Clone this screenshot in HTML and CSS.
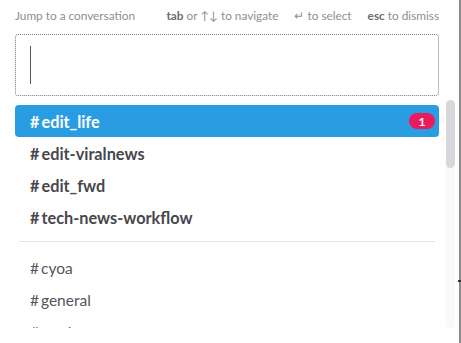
FILE: index.html
```html
<!DOCTYPE html>
<html>
<head>
<meta charset="utf-8">
<link rel="stylesheet" href="styles.css">
</head>
<body>
<div class="switcher">
  <div class="hints">
    <span class="hint-title">Jump to a conversation</span>
    <span class="keys"><b>tab</b> or ↑↓ to navigate<span class="sep"></span>↵ to select<span class="sep"></span><b>esc</b> to dismiss</span>
  </div>
  <div class="input"><span class="caret"></span></div>
  <div class="results">
    <div class="list">
      <div class="row selected"><span class="name"><span class="hash">#</span>edit_life</span><span class="badge">1</span></div>
      <div class="row bold"><span class="name"><span class="hash">#</span>edit-viralnews</span></div>
      <div class="row bold"><span class="name"><span class="hash">#</span>edit_fwd</span></div>
      <div class="row bold"><span class="name"><span class="hash">#</span>tech-news-workflow</span></div>
      <div class="divider"></div>
      <div class="row"><span class="name"><span class="hash">#</span>cyoa</span></div>
      <div class="row"><span class="name"><span class="hash">#</span>general</span></div>
      <div class="row"><span class="name"><span class="hash">#</span>random</span></div>
    </div>
    <div class="scrollbar"><div class="thumb"></div></div>
  </div>
</div>
</body>
</html>
```
FILE: styles.css
```css
html, body {
  margin: 0;
  padding: 0;
  background: #fff;
}
body {
  width: 461px;
  height: 343px;
  overflow: hidden;
  font-family: Lato, "Noto Sans", sans-serif;
}
.switcher {
  box-sizing: border-box;
  width: 461px;
  height: 343px;
  padding-left: 15px;
  border-right: 2px solid #8c8c8c;
  position: relative;
}
.switcher::after {
  content: "";
  position: absolute;
  right: -2px;
  top: 280px;
  width: 3px;
  height: 2px;
  background: #333;
}
.hints {
  height: 34px;
  width: 424px;
  display: flex;
  justify-content: space-between;
  align-items: center;
  font-size: 11.8px;
  color: #8e8e93;
  padding-bottom: 4px;
  box-sizing: border-box;
}
.keys b {
  color: #6c6c72;
  font-weight: 700;
}
.sep {
  display: inline-block;
  width: 16px;
}
.input {
  box-sizing: border-box;
  width: 424px;
  height: 62px;
  border: 1px dotted #7a7a7a;
  border-radius: 3px;
  padding: 11px 0 0 14px;
}
.caret {
  display: block;
  width: 1px;
  height: 38px;
  background: #555459;
}
.results {
  margin-top: 4px;
  height: 228px;
  display: flex;
  gap: 7px;
}
.list {
  width: 424px;
  height: 228px;
  overflow: hidden;
  padding-top: 5px;
  box-sizing: border-box;
}
.row {
  height: 32px;
  display: flex;
  align-items: center;
  justify-content: space-between;
  padding: 0 4px 0 15px;
  border-radius: 4px;
  font-size: 15.5px;
  color: #555459;
}
.row.bold, .row.selected {
  font-weight: 700;
  font-size: 16.3px;
}
.row.bold { color: #47474c; }
.hash {
  margin-right: 2px;
}
.row.selected {
  background: #2a9de2;
  color: #fff;
}
.badge {
  background: #eb1a5d;
  color: #fff;
  font-size: 12px;
  font-weight: 700;
  height: 16px;
  width: 26px;
  border-radius: 8px;
  display: flex;
  align-items: center;
  justify-content: center;
}
.divider {
  height: 1px;
  background: #e3e3e3;
  margin: 8px 4px 10px 4px;
}
.scrollbar {
  width: 9px;
  height: 228px;
  background: #f9f9f9;
  border-radius: 5px;
}
.thumb {
  height: 68px;
  background: #d8d8dc;
  border-radius: 5px;
}
```
